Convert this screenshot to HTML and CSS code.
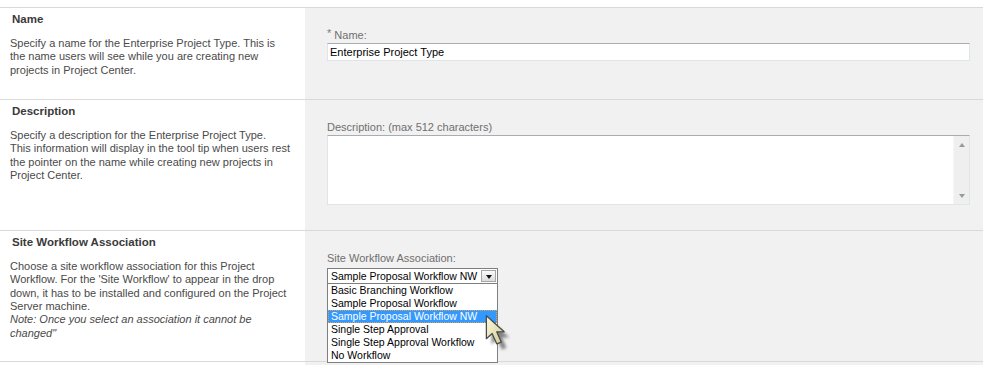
FILE: index.html
```html
<!DOCTYPE html>
<html>
<head>
<meta charset="utf-8">
<link rel="stylesheet" href="styles.css">
</head>
<body>
<div class="form">
  <div class="section section-name">
    <div class="info">
      <h3 class="heading">Name</h3>
      <p class="desc">Specify a name for the Enterprise Project Type. This is<br>the name users will see while you are creating new<br>projects in Project Center.</p>
    </div>
    <div class="field">
      <label class="label"><span class="req">*</span> Name:</label>
      <input class="textbox" type="text" value="Enterprise Project Type">
    </div>
  </div>

  <div class="section section-tall">
    <div class="info">
      <h3 class="heading">Description</h3>
      <p class="desc">Specify a description for the Enterprise Project Type.<br>This information will display in the tool tip when users rest<br>the pointer on the name while creating new projects in<br>Project Center.</p>
    </div>
    <div class="field">
      <label class="label">Description: (max 512 characters)</label>
      <div class="textarea-box">
        <textarea class="textarea"></textarea>
        <div class="scrollbar">
          <span class="arrow-up"></span>
          <span class="arrow-down"></span>
        </div>
      </div>
    </div>
  </div>

  <div class="section section-tall">
    <div class="info">
      <h3 class="heading">Site Workflow Association</h3>
      <p class="desc">Choose a site workflow association for this Project<br>Workflow. For the 'Site Workflow' to appear in the drop<br>down, it has to be installed and configured on the Project<br>Server machine.<br><em>Note: Once you select an association it cannot be<br>changed"</em></p>
    </div>
    <div class="field">
      <label class="label label-select">Site Workflow Association:</label>
      <div class="select-wrap">
        <div class="select">
          <span class="select-value">Sample Proposal Workflow NW</span>
          <span class="select-btn"><span class="select-tri"></span></span>
        </div>
        <ul class="dropdown">
          <li class="option">Basic Branching Workflow</li>
          <li class="option">Sample Proposal Workflow</li>
          <li class="option option-selected">Sample Proposal Workflow NW</li>
          <li class="option">Single Step Approval</li>
          <li class="option">Single Step Approval Workflow</li>
          <li class="option">No Workflow</li>
        </ul>
        <svg class="cursor" width="30" height="39" viewBox="0 0 26 34">
          <defs>
            <linearGradient id="cg" x1="0" y1="0" x2="1" y2="1">
              <stop offset="0" stop-color="#fdfbe0"/>
              <stop offset="1" stop-color="#cfc98e"/>
            </linearGradient>
            <filter id="cs" x="-30%" y="-30%" width="160%" height="160%">
              <feGaussianBlur stdDeviation="1.3"/>
            </filter>
          </defs>
          <path d="M4 4 L4 24 L9 19.5 L13 28.5 L17 27 L13 18 L19.5 18 Z" fill="#000" opacity="0.45" filter="url(#cs)" transform="translate(2.5,2.5)"/>
          <path d="M2 1.5 L2 21.5 L7 17 L11 26 L15 24.5 L11 15.5 L17.5 15.5 Z" fill="url(#cg)" stroke="#4a4a4a" stroke-width="1.1" stroke-linejoin="round"/>
        </svg>
      </div>
    </div>
  </div>

  <div class="section section-rest">
    <div class="info"></div>
    <div class="field"></div>
  </div>
</div>
</body>
</html>
```

FILE: styles.css
```css
html, body {
  margin: 0;
  padding: 0;
  background: #ffffff;
}

body {
  padding-top: 7px;
  font-family: "Liberation Sans", Arial, sans-serif;
  font-size: 11px;
  color: #444444;
  overflow: hidden;
}

.form {
  display: flex;
  flex-direction: column;
}

.section {
  display: grid;
  grid-template-columns: 305px 1fr;
  border-top: 1px solid #d9d9d9;
}

.section-name {
  min-height: 91px;
}

.section-tall {
  min-height: 130px;
}

.section-rest {
  min-height: 20px;
}

.info {
  padding: 5px 10px 0 10px;
}

.heading {
  margin: 0 0 11px 2px;
  font-size: 11.5px;
  line-height: 13px;
  font-weight: bold;
  color: #3a3a3a;
}

.desc {
  margin: 0;
  line-height: 13.33px;
  color: #4a4a4a;
  white-space: nowrap;
}

.desc em {
  font-style: italic;
}

.field {
  background: #f1f1f1;
  padding: 21px 13px 0 22px;
  display: flex;
  flex-direction: column;
  align-items: stretch;
}

.label {
  display: block;
  line-height: 13px;
  color: #6f6f6f;
  margin-bottom: 1px;
}

.label-select {
  margin-bottom: 3px;
}

.req {
  font-size: 11px;
  position: relative;
  top: -2px;
  color: #7a7a7a;
}

.textbox {
  box-sizing: border-box;
  width: 100%;
  height: 18px;
  margin: 0;
  padding: 0 2px;
  border: 1px solid #e0e5ea;
  border-top-color: #a8adb3;
  background: #ffffff;
  font-family: "Liberation Sans", Arial, sans-serif;
  font-size: 11px;
  color: #000000;
  outline: none;
}

.textarea-box {
  box-sizing: border-box;
  height: 70px;
  display: flex;
  border: 1px solid #e0e5ea;
  border-top-color: #a8adb3;
  background: #ffffff;
}

.textarea {
  flex: 1;
  border: none;
  resize: none;
  outline: none;
  padding: 2px;
  margin: 0;
  background: #ffffff;
  font-family: "Liberation Sans", Arial, sans-serif;
  font-size: 11px;
  overflow: hidden;
}

.scrollbar {
  width: 16px;
  background: #efefef;
  border-left: 1px solid #f6f6f6;
  display: flex;
  flex-direction: column;
  justify-content: space-between;
  align-items: center;
  padding: 7px 0 6px;
  box-sizing: border-box;
}

.arrow-up {
  width: 0;
  height: 0;
  border-left: 3px solid transparent;
  border-right: 3px solid transparent;
  border-bottom: 4px solid #9a9a9a;
}

.arrow-down {
  width: 0;
  height: 0;
  border-left: 3px solid transparent;
  border-right: 3px solid transparent;
  border-top: 4px solid #9a9a9a;
}

.select-wrap {
  position: relative;
  width: 171px;
  height: 16px;
  font-size: 10.5px;
}

.select {
  box-sizing: border-box;
  width: 171px;
  height: 16px;
  border: 1px solid #7f7f7f;
  background: #ffffff;
  display: flex;
  align-items: center;
  justify-content: space-between;
  padding: 0 1px 0 3px;
}

.select-value {
  color: #000000;
  line-height: 13px;
  white-space: nowrap;
}

.select-btn {
  box-sizing: border-box;
  width: 15px;
  height: 12px;
  border: 1px solid #a6a6a6;
  background: linear-gradient(#fbfbfb, #dcdcdc);
  display: flex;
  align-items: center;
  justify-content: center;
}

.select-tri {
  width: 0;
  height: 0;
  border-left: 3.5px solid transparent;
  border-right: 3.5px solid transparent;
  border-top: 4px solid #111111;
  margin-top: 1px;
}

.dropdown {
  position: absolute;
  left: 0;
  top: 15px;
  box-sizing: border-box;
  width: 171px;
  margin: 0;
  padding: 0;
  list-style: none;
  background: #ffffff;
  border: 1px solid #7f7f7f;
  z-index: 2;
}

.option {
  box-sizing: border-box;
  height: 13px;
  line-height: 12px;
  padding: 0 0 0 2px;
  color: #000000;
  white-space: nowrap;
  border: 1px solid transparent;
  border-top: none;
}

.option-selected {
  background: #3399ff;
  color: #ffffff;
  border: 1px dotted #e0a050;
  line-height: 11px;
}

.cursor {
  position: absolute;
  left: 157px;
  top: 46px;
  z-index: 3;
}
```
